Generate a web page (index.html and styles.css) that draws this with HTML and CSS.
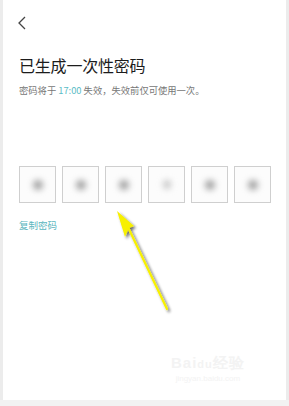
FILE: index.html
```html
<!DOCTYPE html>
<html lang="zh">
<head>
<meta charset="utf-8">
<link rel="stylesheet" href="styles.css">
</head>
<body>
<div class="frame">
  <div class="page">
    <div class="nav">
      <svg class="back" width="10" height="14" viewBox="0 0 10 14"><path d="M8 1 L2 7 L8 13" fill="none" stroke="#444" stroke-width="1.3"/></svg>
    </div>
    <h1 class="title">已生成一次性密码</h1>
    <p class="sub">密码将于 <span class="hl">17:00</span> 失效，失效前仅可使用一次。</p>
    <div class="boxes">
      <div class="box"><span class="dot"></span></div>
      <div class="box"><span class="dot"></span></div>
      <div class="box"><span class="dot"></span></div>
      <div class="box"><span class="dot light"></span></div>
      <div class="box"><span class="dot"></span></div>
      <div class="box"><span class="dot"></span></div>
    </div>
    <div class="copy">复制密码</div>
    <div class="wm">
      <div class="wm1">Bai<span class="paw">du</span>经验</div>
      <div class="wm2">jingyan.baidu.com</div>
    </div>
    <svg class="arrow" width="80" height="115" viewBox="0 0 80 115">
      <defs>
        <filter id="sh" x="-30%" y="-30%" width="160%" height="160%">
          <feGaussianBlur in="SourceAlpha" stdDeviation="1.5"/>
          <feOffset dx="2" dy="2"/>
          <feComponentTransfer><feFuncA type="linear" slope="0.6"/></feComponentTransfer>
          <feMerge><feMergeNode/><feMergeNode in="SourceGraphic"/></feMerge>
        </filter>
      </defs>
      <g filter="url(#sh)">
        <line x1="14" y1="14" x2="55" y2="100" stroke="#f7f000" stroke-width="2.2" stroke-linecap="round"/>
        <path d="M5 2 L22 17 L17 19 L13 28 Z" fill="#f7f000"/>
      </g>
    </svg>
  </div>
  <div class="bottom"></div>
</div>
</body>
</html>
```
FILE: styles.css
```css
html, body { margin: 0; padding: 0; }
body {
  width: 289px; height: 406px; overflow: hidden;
  background: #ececec;
  font-family: "Noto Sans CJK SC", "Noto Sans", sans-serif;
}
.frame { display: flex; flex-direction: column; height: 406px; }
.page {
  position: relative;
  height: 400px;
  margin-left: 3px;
  margin-right: 3px;
  background: #fff;
  padding-left: 16px;
  box-sizing: border-box;
}
.bottom { height: 6px; background: #f2f2f2; }
.nav { height: 54px; padding-top: 16px; box-sizing: border-box; }
.back { display: block; margin-left: -2px; }
.title {
  margin: 0; font-size: 16px; font-weight: 400; color: #1c1c1c;
  line-height: 22px; letter-spacing: -0.2px;
}
.sub {
  margin: 7px 0 0; font-size: 9.3px; color: #777; line-height: 14px;
}
.hl { color: #5bbcc6; }
.boxes { display: flex; gap: 6px; margin-top: 69px; }
.box {
  width: 37px; height: 37px; box-sizing: border-box;
  border: 1px solid #cfcfcf;
  display: flex; align-items: center; justify-content: center;
  background: #fcfcfc;
}
.dot {
  width: 10px; height: 10px; border-radius: 50%;
  background: #a0a0a0; filter: blur(3px);
}
.dot.light { background: #c4c4c4; width: 8px; height: 9px; }
.copy { margin-top: 15px; font-size: 9.5px; color: #5bb6be; line-height: 14px; }
.wm {
  position: absolute; left: 168px; top: 354px;
  color: #f3f3f3; text-align: center; font-family: "Liberation Sans", sans-serif;
}
.wm1 { font-size: 15px; font-weight: 700; letter-spacing: 1px; }
.paw { font-size: 11px; }
.wm2 { font-size: 8px; margin-top: 1px; }
.arrow { position: absolute; left: 109px; top: 209px; }
```
